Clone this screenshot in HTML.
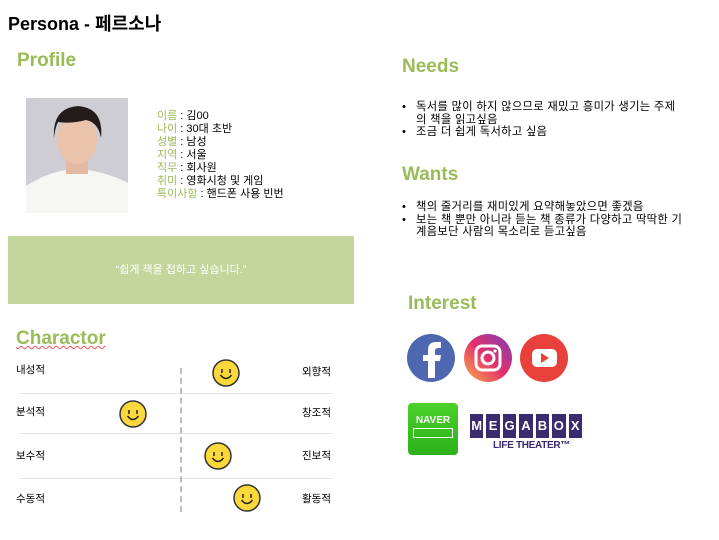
<!DOCTYPE html>
<html><head><meta charset="utf-8"><style>
*{margin:0;padding:0;box-sizing:border-box}
body{width:719px;height:540px;background:#fff;position:relative;overflow:hidden;font-family:"Liberation Sans","Noto Sans CJK KR",sans-serif;color:#000}
.a{position:absolute;white-space:nowrap}
.h{color:#9bbb59;font-weight:bold;font-size:19px}
.t{font-size:10.5px}
.g{color:#9bbb59}
.info div{line-height:13px;font-size:11px}
ul{list-style:none}
li{position:relative;padding-left:14px;font-size:11.3px;line-height:12.5px;letter-spacing:0.3px}
li:before{content:"•";position:absolute;left:0}
.sep{position:absolute;left:20px;width:312px;height:1px;background:#e6e6e0}
.mb{flex:1;background:#3a2a6e;color:#fff;font-weight:bold;font-size:13px;text-align:center;line-height:24px}
</style></head><body>
<div class="a" style="left:8px;top:10px;font-size:18px;font-weight:bold">Persona - 페르소나</div>
<div class="a h" style="left:17px;top:50px">Profile</div>
<svg class="a" style="left:26px;top:98px" width="102" height="115" viewBox="0 0 102 115">
<rect width="102" height="115" fill="#cdcdd3"/>
<path d="M0 115 L0 88 Q20 75 40 72 L62 72 Q85 76 102 85 L102 115Z" fill="#f6f6f4"/>
<rect x="40" y="60" width="22" height="16" fill="#e4b9a2"/>
<ellipse cx="51" cy="42" rx="20" ry="24" fill="#ebc2aa"/>
<path d="M28 40 Q26 10 52 8 Q78 10 75 40 Q72 24 60 22 Q45 26 32 24 Q29 30 28 40Z" fill="#221c1a"/>
</svg>
<div class="a info" style="left:157px;top:110px">
<div><span class="g">이름</span> : 김00</div>
<div><span class="g">나이</span> : 30대 초반</div>
<div><span class="g">성별</span> : 남성</div>
<div><span class="g">지역</span> : 서울</div>
<div><span class="g">직무</span> : 회사원</div>
<div><span class="g">취미</span> : 영화시청 및 게임</div>
<div><span class="g">특이사항</span> : 핸드폰 사용 빈번</div>
</div>
<div class="a" style="left:8px;top:236px;width:346px;height:68px;background:#c4d69c;color:#fff;font-size:11px;text-align:center;line-height:68px">“쉽게 책을 접하고 싶습니다.”</div>
<div class="a h" style="left:16px;top:328px;text-decoration:underline wavy #e55;text-decoration-thickness:1px">Charactor</div>
<div class="a t" style="left:16px;top:362px">내성적</div><div class="a t" style="left:302px;top:364px">외향적</div>
<div class="a t" style="left:16px;top:404px">분석적</div><div class="a t" style="left:302px;top:405px">창조적</div>
<div class="a t" style="left:16px;top:448px">보수적</div><div class="a t" style="left:302px;top:448px">진보적</div>
<div class="a t" style="left:16px;top:491px">수동적</div><div class="a t" style="left:302px;top:491px">활동적</div>
<div class="sep" style="top:393px"></div><div class="sep" style="top:433px"></div><div class="sep" style="top:478px"></div>
<div class="a" style="left:180px;top:368px;width:0;height:144px;border-left:2px dashed #bbb"></div>
<svg width="0" height="0" style="position:absolute"><defs><g id="f"><circle cx="14" cy="14" r="13" fill="#fcd83a" stroke="#333" stroke-width="1.5"/><path d="M10 10v4M18 10v4" stroke="#222" stroke-width="1.5"/><path d="M8.5 16 Q14 23 19.5 16" fill="none" stroke="#222" stroke-width="1.5"/></g></defs></svg>
<svg class="a" style="left:212px;top:359px" width="28" height="28"><use href="#f"/></svg>
<svg class="a" style="left:119px;top:400px" width="28" height="28"><use href="#f"/></svg>
<svg class="a" style="left:204px;top:442px" width="28" height="28"><use href="#f"/></svg>
<svg class="a" style="left:233px;top:484px" width="28" height="28"><use href="#f"/></svg>
<div class="a h" style="left:402px;top:56px">Needs</div>
<ul class="a" style="left:402px;top:101px;width:310px;white-space:normal">
<li>독서를 많이 하지 않으므로 재밌고 흥미가 생기는 주제<br>의 책을 읽고싶음</li>
<li>조금 더 쉽게 독서하고 싶음</li></ul>
<div class="a h" style="left:402px;top:164px">Wants</div>
<ul class="a" style="left:402px;top:201px;width:310px;white-space:normal">
<li>책의 줄거리를 재미있게 요약해놓았으면 좋겠음</li>
<li>보는 책 뿐만 아니라 듣는 책 종류가 다양하고 딱딱한 기<br>계음보단 사람의 목소리로 듣고싶음</li></ul>
<div class="a h" style="left:408px;top:293px">Interest</div>
<svg class="a" style="left:405px;top:333px" width="170" height="52">
<defs><linearGradient id="ig" x1="0" y1="1" x2="1" y2="0"><stop offset="0" stop-color="#fdb14a"/><stop offset=".5" stop-color="#e1306c"/><stop offset="1" stop-color="#7a3fb5"/></linearGradient></defs>
<circle cx="26" cy="25" r="24" fill="#4d67b0"/>
<path d="M23 45V28h-5v-6h5v-5q0-8 8-8h5v6h-3q-3 0-3 3v4h6l-1 6h-5v17z" fill="#fff"/>
<circle cx="83" cy="25" r="24" fill="url(#ig)"/>
<rect x="71" y="13" width="24" height="24" rx="6" fill="none" stroke="#fff" stroke-width="3"/>
<circle cx="83" cy="25" r="6" fill="none" stroke="#fff" stroke-width="3"/><circle cx="90" cy="18" r="1.6" fill="#fff"/>
<circle cx="139" cy="25" r="24" fill="#e8403b"/>
<rect x="127" y="16" width="25" height="18" rx="5" fill="#fff"/><path d="M136 20v10l8-5z" fill="#e8403b"/>
</svg>
<div class="a" style="left:408px;top:403px;width:50px;height:52px;border-radius:4px;background:linear-gradient(#4cd12a,#2bb01a)">
<div style="color:#fff;font-weight:bold;font-size:10px;text-align:center;margin-top:12px">NAVER</div>
<div style="margin:2px 5px;height:10px;border:1.5px solid #fff"></div></div>
<div class="a" style="left:470px;top:414px;width:112px;height:24px;display:flex;gap:3px">
<span class="mb">M</span><span class="mb">E</span><span class="mb">G</span><span class="mb">A</span><span class="mb">B</span><span class="mb">O</span><span class="mb">X</span></div>
<div class="a" style="left:493px;top:440px;font-size:10px;font-weight:bold;color:#3a2a6e;letter-spacing:-0.3px">LIFE THEATER™</div>
</body></html>
